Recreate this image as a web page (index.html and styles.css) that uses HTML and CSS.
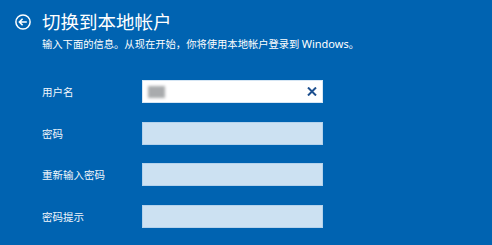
FILE: index.html
```html
<!DOCTYPE html>
<html lang="zh-CN">
<head>
    <meta charset="UTF-8">
    <title>切换到本地帐户</title>
    <link rel="stylesheet" href="styles.css">
</head>
<body>

    <!-- Header -->
    <div class="header">
        <svg class="back" width="16" height="16" viewBox="0 0 16 16">
            <circle cx="8" cy="8" r="7.1" fill="none" stroke="#fff" stroke-width="1.5"/>
            <path d="M11.8 8H4.4M7.6 4.8L4.4 8l3.2 3.2" fill="none" stroke="#fff" stroke-width="1.6"/>
        </svg>
        <h1 class="title">切换到本地帐户</h1>
    </div>
    <p class="intro">输入下面的信息。从现在开始，你将使用本地帐户登录到 <span class="latin">Windows</span>。</p>

    <!-- Account form -->
    <div class="form">
        <label class="label">用户名</label>
        <div class="field filled">
            <span class="blur"></span>
            <svg class="clear" width="10" height="9" viewBox="0 0 10 9">
                <path d="M1 0.5l8 8M9 0.5l-8 8" stroke="#1d4f8e" stroke-width="2"/>
            </svg>
        </div>

        <label class="label">密码</label>
        <div class="field"></div>

        <label class="label">重新输入密码</label>
        <div class="field"></div>

        <label class="label">密码提示</label>
        <div class="field"></div>
    </div>

</body>
</html>
```

FILE: styles.css
```css
body {
    margin: 0;
    background-color: #0063b1;
    color: #fff;
    font-family: "Noto Sans CJK SC", "Noto Sans", sans-serif;
    height: 245px;
    overflow: hidden;
}
.header {
    display: flex;
    align-items: center;
    gap: 11px;
    padding: 12px 0 0 15px;
    height: 19px;
}
.back {
    flex: none;
}
.title {
    margin: 0;
    font-size: 18.5px;
    line-height: 19px;
    font-weight: normal;
}
.intro {
    margin: 7px 0 0 42px;
    font-size: 10.3px;
    line-height: 12px;
}
.latin {
    font-family: "Noto Sans", sans-serif;
    font-size: 11px;
}
.form {
    display: grid;
    grid-template-columns: 100px 181px;
    grid-auto-rows: 23px;
    row-gap: 18.5px;
    margin: 30px 0 0 42px;
}
.label {
    font-size: 10.5px;
    line-height: 23px;
    color: #f2f7fc;
}
.field {
    background-color: #cce1f2;
    border: 1px solid #b4d2ec;
    box-sizing: border-box;
    display: flex;
    align-items: center;
}
.field.filled {
    background-color: #fff;
    border-color: #d6e6f4;
    padding: 0 5px 0 5px;
}
.blur {
    width: 17px;
    height: 12px;
    background-color: #a9abad;
    filter: blur(1.5px);
}
.clear {
    margin-left: auto;
}
```
